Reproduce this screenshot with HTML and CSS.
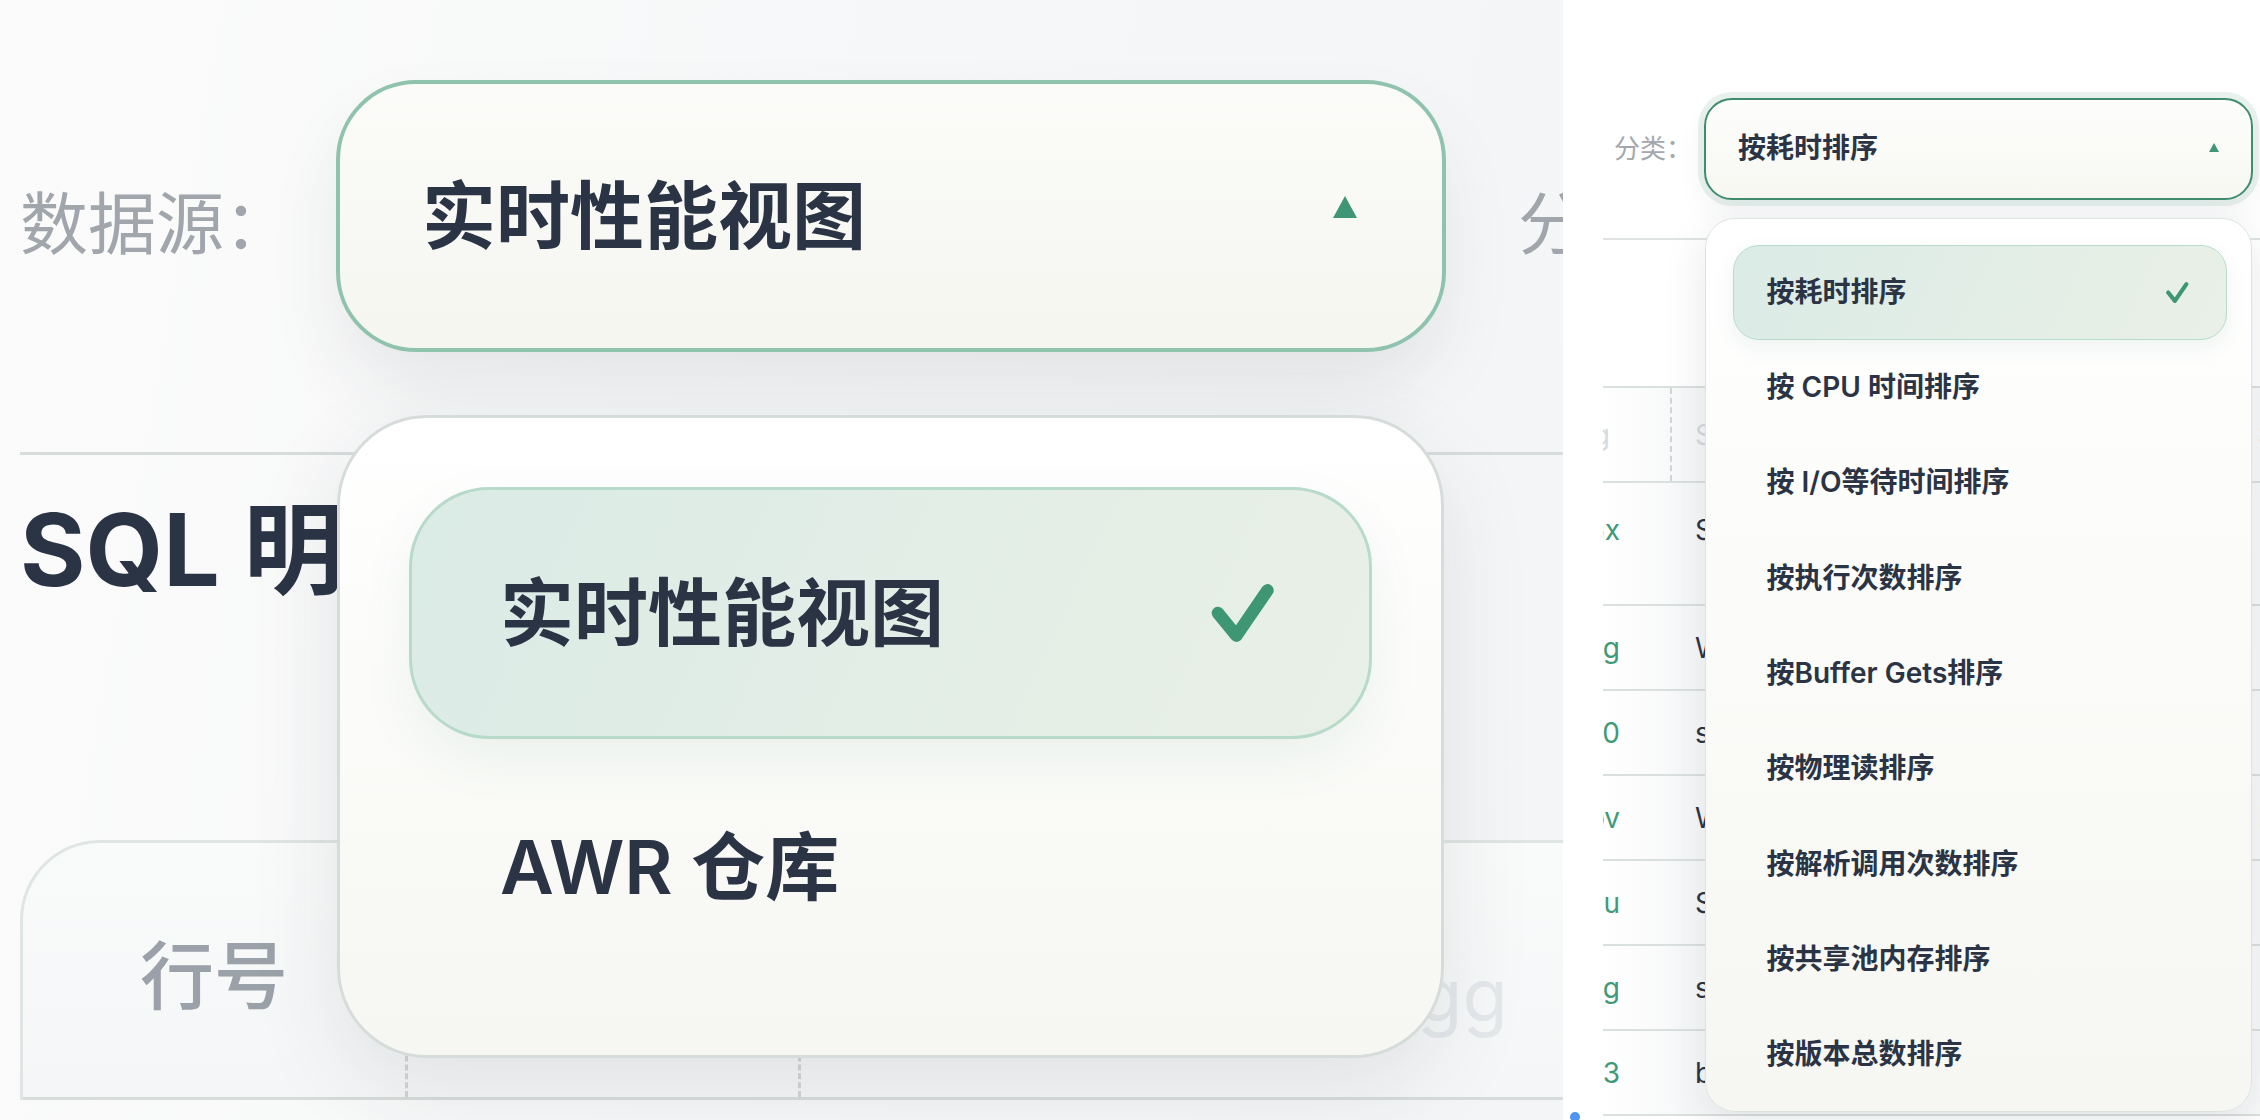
FILE: index.html
```html
<!DOCTYPE html>
<html lang="zh-CN">
<head>
    <meta charset="UTF-8">
    <meta name="viewport" content="width=device-width, initial-scale=1.0">
    <title>SQL 明细 - 下拉选择</title>
    <link rel="stylesheet" href="styles.css">
</head>
<body>
    <div class="shot">
        <!-- enlarged view: data source select, open -->
        <section class="zoom-panel">
            <div class="toolbar">
                <span class="field-label">数据源：</span>
                <div class="select-wrap">
                    <div class="select">
                        <span class="select-value">实时性能视图</span>
                        <span class="caret"></span>
                    </div>
                    <ul class="menu">
                        <li class="menu-item is-active">
                            <span>实时性能视图</span>
                            <svg class="check" viewBox="0 0 24 24"><polyline points="3.5,12 10,20 21,4"/></svg>
                        </li>
                        <li class="menu-item"><span>AWR 仓库</span></li>
                    </ul>
                </div>
                <span class="field-label">分类：</span>
            </div>

            <h2 class="title">SQL 明细</h2>

            <div class="card">
                <div class="table-head">
                    <div class="th">行号</div>
                    <div class="th"></div>
                    <div class="th ghost"><span>gg</span></div>
                </div>
            </div>
        </section>

        <div class="gap"><span class="dot"></span></div>

        <!-- normal view: category select, open -->
        <section class="panel">
            <div class="toolbar">
                <span class="field-label">分类：</span>
                <div class="select-wrap">
                    <div class="select">
                        <span class="select-value">按耗时排序</span>
                        <span class="caret"></span>
                    </div>
                    <ul class="menu">
                        <li class="menu-item is-active">
                            <span>按耗时排序</span>
                            <svg class="check" viewBox="0 0 24 24"><polyline points="3.5,12 10,20 21,4"/></svg>
                        </li>
                        <li class="menu-item"><span>按 CPU 时间排序</span></li>
                        <li class="menu-item"><span>按 I/O等待时间排序</span></li>
                        <li class="menu-item"><span>按执行次数排序</span></li>
                        <li class="menu-item"><span>按Buffer Gets排序</span></li>
                        <li class="menu-item"><span>按物理读排序</span></li>
                        <li class="menu-item"><span>按解析调用次数排序</span></li>
                        <li class="menu-item"><span>按共享池内存排序</span></li>
                        <li class="menu-item"><span>按版本总数排序</span></li>
                    </ul>
                </div>
            </div>

            <div class="table">
                <div class="tr head">
                    <div class="td id">Sorting</div>
                    <div class="td sql">SQL 文本</div>
                    <div class="td more">SQL 类型</div>
                </div>
                <div class="tr first">
                    <div class="td id">7g3k9n2p1wq5x</div>
                    <div class="td sql">SELECT t.owner, t.table_name FROM dba_tables t</div>
                    <div class="td more"></div>
                </div>
                <div class="tr">
                    <div class="td id">a8f2c6vrm0tvg</div>
                    <div class="td sql">WITH recent AS (SELECT * FROM v$session)</div>
                    <div class="td more"></div>
                </div>
                <div class="tr">
                    <div class="td id">4kqz7wd9pa1j0</div>
                    <div class="td sql">select count(*) from orders</div>
                    <div class="td more"></div>
                </div>
                <div class="tr">
                    <div class="td id">b2ncx1fh3qkpv</div>
                    <div class="td sql">WITH t AS (SELECT sql_id FROM v$sql)</div>
                    <div class="td more">INSERT</div>
                </div>
                <div class="tr">
                    <div class="td id">9dmt5r8wz2jqu</div>
                    <div class="td sql">SELECT o.order_id, o.amount FROM orders o</div>
                    <div class="td more"></div>
                </div>
                <div class="tr">
                    <div class="td id">6hx0v3sy7cmug</div>
                    <div class="td sql">select * from customers</div>
                    <div class="td more"></div>
                </div>
                <div class="tr">
                    <div class="td id">0pwl4cte1ak93</div>
                    <div class="td sql">begin dbms_stats.gather_table_stats; end;</div>
                    <div class="td more"></div>
                </div>
            </div>
        </section>
    </div>
</body>
</html>
```

FILE: styles.css
```css
* {
    box-sizing: border-box;
}

body {
    margin: 0;
    width: 2260px;
    height: 1120px;
    overflow: hidden;
    background-color: #ffffff;
    font-family: Inter, "Noto Sans CJK SC", sans-serif;
    color: #2b3445;
}

.shot {
    display: flex;
    height: 1120px;
}

ul {
    margin: 0;
    padding: 0;
    list-style: none;
}

.check polyline {
    fill: none;
    stroke: #3e9675;
    stroke-linecap: round;
    stroke-linejoin: round;
}

.caret {
    width: 0;
    height: 0;
    border-style: solid;
    border-color: transparent transparent #3e9675 transparent;
    flex-shrink: 0;
}

/* ---------- enlarged panel ---------- */

.zoom-panel {
    width: 1563px;
    flex-shrink: 0;
    position: relative;
    overflow: hidden;
    padding-left: 20px;
    background: linear-gradient(100deg, #fbfbfb 0%, #f6f7f8 55%, #f4f5f6 100%);
}

.zoom-panel .toolbar {
    display: flex;
    align-items: center;
    gap: 72px;
    padding: 80px 0 100px;
    border-bottom: 3px solid #d7dddb;
}

.zoom-panel .field-label {
    width: 244px;
    flex-shrink: 0;
    margin-top: 18px;
    font-size: 68px;
    line-height: 1.2;
    color: #a1a6ad;
    white-space: nowrap;
}

.zoom-panel .select-wrap {
    position: relative;
    width: 1110px;
    flex-shrink: 0;
}

.zoom-panel .select {
    height: 272px;
    display: flex;
    align-items: center;
    justify-content: space-between;
    padding: 0 85px 0 82px;
    border: 4px solid #8fc3ae;
    border-radius: 80px;
    background: linear-gradient(180deg, #fbfbf9, #f5f6f0);
    box-shadow: 0 40px 80px -10px rgba(40, 50, 60, 0.10);
}

.zoom-panel .select-value {
    font-size: 74px;
    font-weight: 600;
    line-height: 1.2;
}

.zoom-panel .caret {
    border-width: 0 12px 22px 12px;
    margin-bottom: 18px;
}

.zoom-panel .menu {
    position: absolute;
    top: calc(100% + 63px);
    left: 1px;
    right: 2px;
    z-index: 2;
    display: flex;
    flex-direction: column;
    gap: 2px;
    padding: 69px 69px 62px;
    border: 3px solid #d6dcd9;
    border-radius: 90px;
    background: linear-gradient(180deg, #ffffff, #f6f7f2);
    box-shadow: 0 30px 90px rgba(40, 50, 60, 0.10);
}

.zoom-panel .menu-item {
    height: 252px;
    display: flex;
    align-items: center;
    justify-content: space-between;
    padding: 0 92px 0 88px;
    border: 3px solid transparent;
    border-radius: 80px;
    font-size: 74px;
    font-weight: 600;
    line-height: 1.2;
}

.zoom-panel .menu-item.is-active {
    border-color: #b7dacb;
    background: linear-gradient(115deg, #dbebe6, #e9f0e6);
    box-shadow: 0 20px 50px rgba(60, 130, 100, 0.08);
}

.zoom-panel .check {
    width: 70px;
    height: 68px;
}

.zoom-panel .check polyline {
    stroke-width: 4.4;
}

.zoom-panel .title {
    margin: 35px 0 230px;
    font-size: 100px;
    font-weight: 700;
    line-height: 120px;
    white-space: nowrap;
}

.zoom-panel .card {
    width: 1800px;
    border: 3px solid #dfe5e2;
    border-right: none;
    border-bottom: none;
    border-radius: 80px 0 0 0;
    background: linear-gradient(180deg, #f9fafa, #f5f6f7);
}

.zoom-panel .table-head {
    display: grid;
    grid-template-columns: 385px 393px 1fr;
    height: 257px;
    border-bottom: 3px solid #d6dcd9;
}

.zoom-panel .th {
    display: flex;
    align-items: center;
    justify-content: center;
    border-right: 3px dashed #cfd6d3;
    font-size: 74px;
    font-weight: 500;
    color: #9aa1a8;
    white-space: nowrap;
}

.zoom-panel .th.ghost {
    justify-content: flex-start;
    padding-left: 616px;
    padding-top: 50px;
    border-right: none;
    color: #e4e8eb;
    font-weight: 400;
}

/* ---------- gap between the two views ---------- */

.gap {
    width: 40px;
    flex-shrink: 0;
    position: relative;
    background-color: #ffffff;
}

.dot {
    position: absolute;
    left: 7px;
    bottom: -2px;
    width: 10px;
    height: 10px;
    border-radius: 50%;
    background-color: #4f94f2;
}

/* ---------- normal panel ---------- */

.panel {
    flex: 1;
    position: relative;
    overflow: hidden;
    background-color: #ffffff;
}

.panel .toolbar {
    display: flex;
    align-items: center;
    gap: 25px;
    padding: 98px 0 38px 11px;
    border-bottom: 2px solid #dfe4e2;
}

.panel .field-label {
    width: 65px;
    flex-shrink: 0;
    font-size: 26px;
    line-height: 1.2;
    color: #a3a8ae;
    white-space: nowrap;
}

.panel .select-wrap {
    position: relative;
    width: 549px;
    flex-shrink: 0;
}

.panel .select {
    height: 102px;
    display: flex;
    align-items: center;
    justify-content: space-between;
    padding: 0 32px;
    border: 2px solid #3f8c6e;
    border-radius: 28px;
    background: linear-gradient(180deg, #fdfdfc, #f7f8f2);
    box-shadow: 0 0 0 6px rgba(70, 150, 120, 0.12), 0 14px 30px rgba(40, 50, 60, 0.06);
}

.panel .select-value {
    font-size: 28px;
    font-weight: 600;
    line-height: 1.2;
}

.panel .caret {
    border-width: 0 5px 9px 5px;
    margin-bottom: 4px;
}

.panel .menu {
    position: absolute;
    top: calc(100% + 18px);
    left: 1px;
    right: 1px;
    z-index: 2;
    height: 894px;
    overflow: hidden;
    padding: 26px 24px 8px 27px;
    border: 1px solid #dde3e0;
    border-radius: 30px;
    background: linear-gradient(180deg, #ffffff, #f6f7f2);
    box-shadow: 0 14px 44px rgba(40, 50, 60, 0.11);
}

.panel .menu-item {
    height: 95.3px;
    display: flex;
    align-items: center;
    justify-content: space-between;
    padding: 0 36.5px 0 32.5px;
    border: 1.5px solid transparent;
    border-radius: 26px;
    font-size: 28px;
    font-weight: 600;
    line-height: 1.2;
    white-space: nowrap;
}

.panel .menu-item.is-active {
    border-color: #b8dccb;
    background: linear-gradient(115deg, #dbebe6, #e9f0e6);
    box-shadow: 0 8px 20px rgba(60, 130, 100, 0.08);
}

.panel .check {
    width: 26px;
    height: 25px;
}

.panel .check polyline {
    stroke-width: 4;
}

.panel .table {
    margin-top: 146px;
    border-top: 2px solid #dae0dd;
    background: linear-gradient(90deg, #ffffff, #f7f8f9 80px, #f9fafa);
}

.panel .tr {
    display: grid;
    grid-template-columns: 69px 578px 1fr;
    align-items: center;
    height: 85px;
    border-bottom: 2px solid #dae0dd;
    font-size: 28px;
    line-height: 40px;
}

.panel .tr.head {
    height: 95px;
    align-items: stretch;
}

.panel .tr.first {
    height: 123px;
    align-items: start;
    padding-top: 27px;
}

.panel .td {
    overflow: hidden;
    white-space: nowrap;
}

.panel .td.id {
    display: flex;
    justify-content: flex-end;
    padding-right: 52px;
    color: #3f9a78;
}

.panel .td.sql {
    padding-left: 23px;
    color: #2b3445;
}

.panel .td.more {
    padding-left: 8px;
    color: #2b3445;
}

.panel .head .td {
    display: flex;
    align-items: center;
    color: #d6dadf;
}

.panel .head .td.id {
    justify-content: flex-end;
    padding-right: 60px;
    border-right: 2px dashed #cfd6d3;
}

.panel .head .td.more {
    color: #c9ced4;
}
```
